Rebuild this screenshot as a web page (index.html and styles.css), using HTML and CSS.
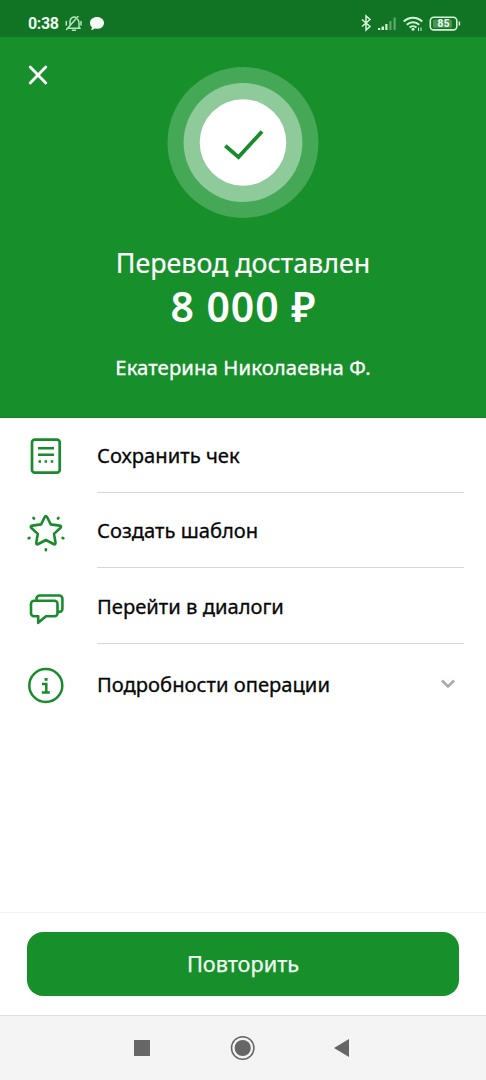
FILE: index.html
```html
<!DOCTYPE html>
<html lang="ru">
<head>
<meta charset="utf-8">
<meta name="viewport" content="width=device-width, initial-scale=1">
<title>Перевод доставлен</title>
<link rel="stylesheet" href="styles.css">
</head>
<body>
<div class="screen">
  <div class="status">
    <span class="clock">0:38</span>
    <svg class="status-left" width="44" height="20" viewBox="0 0 44 20" fill="none">
      <g stroke="#b9e6bf" stroke-width="1.5" stroke-linecap="round">
        <path d="M4.500 15.200h11.700M15 15V10.500c0-2-.3-3.300-1.300-4.300M11.500 4.300a4.300 4.300 0 0 0-5.500 4v3M2.300 8.500v3.500M17 8.500v3.500M8.500 17.300h3"/>
        <path d="M2.500 16.500 14 3.500"/>
      </g>
      <path d="M33 4c4 0 7 2.500 7 5.900s-3 5.900-7 5.900c-.8 0-1.600-.1-2.300-.3-1 .9-2.200 1.500-3.700 1.400.7-.8 1-1.800.9-2.900C26.600 12.900 26 11.500 26 9.900 26 6.500 29 4 33 4z" fill="#f4fbf4"/>
    </svg>
    <svg class="status-right" width="102" height="20" viewBox="0 0 102 20" fill="none">
      <path d="m2 6.500 8 7-4 3.500V3l4 3.500-8 7" stroke="#d5f7d7" stroke-width="1.500"/>
      <g fill="#d5f7d7"><path d="M18 15h2.200v2H18zM21.500 13.500H24V17h-2.500z"/><path d="M25.300 11h2.200v6h-2.200z"/><path opacity=".4" d="M29.300 8h2.200v9h-2.200zM33.500 4.500h2.200V17h-2.200z"/></g>
      <g stroke="#d5f7d7" stroke-width="2"><path d="M43.800 8.500a13 13 0 0 1 18.400 0M46.800 11.800a9 9 0 0 1 12.400 0M49.600 14.600a5 5 0 0 1 6.800 0"/></g>
      <circle cx="53" cy="16.300" r="1.500" fill="#d5f7d7"/>
      <path d="M58.500 14.500V18M61 14.500V18" stroke="#d5f7d7"/>
      <rect x="70.300" y="4.300" width="26.500" height="12.600" rx="3.500" stroke="#d5f7d7" stroke-width="1.600"/>
      <rect x="73" y="6.500" width="19" height="8.200" rx="1.500" fill="#4b9454"/>
      <path d="M99.400 8.500v4" stroke="#d5f7d7" stroke-width="1.500"/>
      <text class="battery-text" x="83.700" y="14.300" text-anchor="middle">85</text>
    </svg>
  </div>

  <header class="hero">
    <svg class="close" width="22" height="22" viewBox="0 0 22 22"><path d="m3.200 3 15.600 16M18.800 3 3.200 19" stroke="#fff" stroke-width="2.800" stroke-linecap="round"/></svg>
    <svg class="badge" width="152" height="152" viewBox="0 0 152 152" fill="none">
      <circle cx="76" cy="75.500" r="75.500" fill="#45a857"/>
      <circle cx="76" cy="75.500" r="59.400" fill="#8eca9a"/>
      <circle cx="76" cy="75.500" r="43.300" fill="#fff"/>
      <path d="m58.300 78.800 13.200 11.300L95 64.500" stroke="#198b2d" stroke-width="3.800"/>
    </svg>
    <h1 class="title">Перевод доставлен</h1>
    <div class="amount">8 000 ₽</div>
    <div class="name">Екатерина Николаевна Ф.</div>
  </header>

  <main class="list">
    <div class="row">
      <svg class="icon" width="42" height="42" viewBox="0 0 42 42" fill="none" stroke="#198b2d">
        <rect x="7" y="4.700" width="27.700" height="33" rx="2.800" stroke-width="2.700"/>
        <path d="M13 13.200h16M13 19.800h16" stroke-width="2.400"/>
        <path d="M13.500 26.500h2.500M19.600 26.500h2.500M25.700 26.500h2.500" stroke-width="2.500"/>
      </svg>
      <span class="label">Сохранить чек</span>
    </div>
    <div class="row">
      <svg class="icon star" width="42" height="42" viewBox="0 0 42 42" fill="none" stroke="#198b2d">
        <path d="M19.600 6.300q1.300-2.300 2.600 0l3.500 7.100 8.700 1.200q2.700.5.900 2.400l-6.300 5.900 1.500 8.600q.3 2.600-2 1.500l-7.600-4-7.600 4q-2.300 1.100-2-1.500l1.500-8.600-6.300-5.900q-1.800-1.900.9-2.400l8.700-1.200z" stroke-width="2.600" stroke-linejoin="round"/>
        <path d="m8.500 7 .5.500M33 7.500l.5-.5M3.700 27.200l.7-.3M37.600 26.900l.7.300M20.900 38.300v.9" stroke-width="2.700" stroke-linecap="round"/>
      </svg>
      <span class="label">Создать шаблон</span>
    </div>
    <div class="row">
      <svg class="icon chat" width="42" height="42" viewBox="0 0 42 42" fill="none" stroke="#198b2d" stroke-width="2.600" stroke-linejoin="round">
        <path d="M8.500 12.700h21a3 3 0 0 1 3 3v9.500a3 3 0 0 1-3 3H21l-7.800 6.600v-6.600H9a3 3 0 0 1-3-3v-9.500a3 3 0 0 1 3-3"/>
        <path d="M11.500 12.700v-2a3.200 3.200 0 0 1 3.200-3.200h19.500a3.200 3.200 0 0 1 3.200 3.200v10a3.200 3.200 0 0 1-3.200 3.200h-1.500"/>
      </svg>
      <span class="label">Перейти в диалоги</span>
    </div>
    <div class="row row-last">
      <svg class="icon" width="42" height="42" viewBox="0 0 42 42" fill="none" stroke="#198b2d">
        <circle cx="20.800" cy="21.500" r="16.500" stroke-width="2.500"/>
        <path d="M17 20h4.300v8.300M16.800 28.500h8" stroke-width="2.500"/>
        <path d="M19.600 15.400h3" stroke-width="2.800"/>
      </svg>
      <span class="label">Подробности операции</span>
      <svg class="chevron" width="18" height="14" viewBox="0 0 18 14" fill="none"><path d="m3 3.500 6 6 6-6" stroke="#aaa" stroke-width="2.500"/></svg>
    </div>
  </main>

  <footer class="action"><button class="repeat">Повторить</button></footer>

  <nav class="system">
    <svg width="486" height="64" viewBox="0 0 486 64">
      <path d="M134 24h16v16h-16z" fill="#666"/>
      <circle cx="242.700" cy="32" r="11.200" fill="none" stroke="#666" stroke-width="1.500"/>
      <circle cx="242.700" cy="32" r="8.100" fill="#666"/>
      <path d="M334 32 349 23v18z" fill="#666"/>
    </svg>
  </nav>
</div>
</body>
</html>
```
FILE: styles.css
```css
* { box-sizing: border-box; }
body { margin: 0; background: #fff; font-family: "Noto Sans", "Open Sans", sans-serif; }
.screen { width: 486px; height: 1080px; display: flex; flex-direction: column; overflow: hidden; background: #fff; }

.status { height: 37px; flex: none; display: flex; align-items: flex-start; padding: 13px 24px 0 28px; background: #117324; }
.clock { width: 35px; color: #eefaef; font: 700 16px/22px Roboto, sans-serif; letter-spacing: -.35px; }
.status-left { margin-left: 1px; }
.status-right { margin-left: auto; }
.battery-text { font: 700 10px Roboto, sans-serif; fill: #f4fff4; letter-spacing: .4px; }

.hero { position: relative; height: 381px; flex: none; display: flex; flex-direction: column; align-items: center; padding-top: 30px; background: #178f2b; border-bottom: 1px solid #147e27; color: #fff; white-space: nowrap; }
.close { position: absolute; left: 27px; top: 27px; }
.badge { display: block; flex: none; }
.title { margin: 26px 0 0; font-size: 26.800px; line-height: 36px; font-weight: 400; -webkit-text-stroke: .2px currentColor; }
.amount { margin-top: 1px; padding-left: 1px; font-size: 41px; line-height: 48px; font-weight: 600; letter-spacing: .95px; }
.name { margin-top: 23px; font-size: 20.300px; line-height: 28px; font-weight: 400; letter-spacing: .1px; -webkit-text-stroke: .3px currentColor; }

.list { flex: 1; display: flex; flex-direction: column; }
.row { position: relative; height: 75.500px; flex: none; display: flex; align-items: center; padding: 0 22px 0 25px; }
.row:not(.row-last)::after { content: ""; position: absolute; left: 97px; right: 22px; bottom: .600px; height: 1px; background: #d6d6d6; }
.row-last { height: 81px; }
.icon { flex: none; }
.star { margin-top: 2px; }
.chat { margin-top: 4px; }
.label { margin-left: 30px; margin-bottom: 2px; font-size: 20.200px; line-height: 30px; font-weight: 400; color: #080808; white-space: nowrap; -webkit-text-stroke: .3px currentColor; }
.chevron { margin-left: auto; margin-right: 7px; margin-bottom: 3px; }

.action { height: 103px; flex: none; padding: 19px 27px 0; border-top: 1px solid #f3f3f3; background: #fff; }
.repeat { display: block; width: 432px; height: 64px; padding: 0; border: 0; border-radius: 16px; background: #178f2b; color: #f2fff3; font: 400 21.700px/64px "Noto Sans", sans-serif; -webkit-text-stroke: .25px currentColor; }
.system { height: 65px; flex: none; background: #f4f4f4; border-top: 1px solid #dfdfdf; }
.system svg { display: block; }
```
